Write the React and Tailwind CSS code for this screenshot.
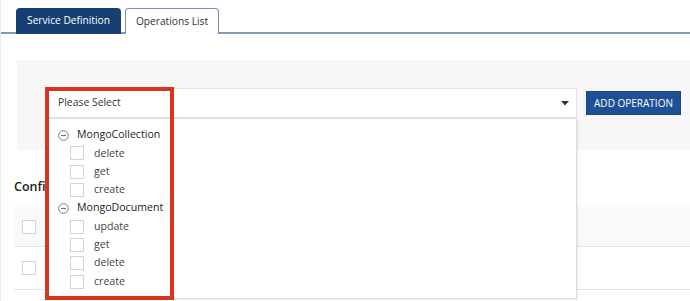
import React from "react";

function Box({ className = "" }) {
  return <span className={"block w-[14px] h-[14px] border border-[#d4d4d4] bg-white " + className} />;
}

function Minus() {
  return (
    <svg width="11" height="11" viewBox="0 0 11 11" className="shrink-0">
      <circle cx="5.5" cy="5.5" r="4.8" fill="none" stroke="#7a7a7a" strokeWidth="1" />
      <line x1="3" y1="5.5" x2="8" y2="5.5" stroke="#7a7a7a" strokeWidth="1.2" />
    </svg>
  );
}

function Group({ name, items }) {
  return (
    <>
      <div className="h-[18.3px] flex items-center pl-[12px] gap-[8px]">
        <Minus />
        <span className="text-[10.6px] text-[#1e1e1e] font-medium">{name}</span>
      </div>
      {items.map((it, i) => (
        <div key={i} className="h-[18.3px] flex items-center pl-[24px] gap-[10px]">
          <Box />
          <span className="text-[10.6px] text-[#444]">{it}</span>
        </div>
      ))}
    </>
  );
}

export default function App() {
  return (
    <div
      className="w-[690px] h-[301px] overflow-hidden bg-white border-l border-[#ececec]"
      style={{ fontFamily: '"Open Sans", "Noto Sans", sans-serif' }}
    >
      <div className="h-[34px] flex items-end gap-[4px] pl-[15px] border-b-2 border-[#8299b8]">
        <div className="w-[105px] -mb-[2px] h-[26px] bg-[#163f72] rounded-t-[4px] flex items-center justify-center text-white text-[10.2px]">
          Service Definition
        </div>
        <div className="w-[94px] h-[26px] -mb-[2px] bg-white border border-b-0 border-[#7790b2] rounded-t-[4px] flex items-center justify-center text-[#333] text-[10.2px]">
          Operations List
        </div>
      </div>

      <div className="ml-[16px] mt-[26px] h-[90px] bg-[#f7f7f7] pt-[28px] pl-[28px] flex items-start gap-[9px]">
        <div className="relative w-[532px] h-[30px] bg-white border border-[#e2e2e2] flex items-center pl-[12px] pr-[7px] justify-between">
          <span className="text-[10.4px] text-[#333]">Please Select</span>
          <svg width="8" height="5" viewBox="0 0 8 5">
            <path d="M0 0 L8 0 L4 4.5 Z" fill="#333" />
          </svg>
          <div className="absolute left-[-1px] top-[29px] w-[532px] h-[181px] bg-white border border-[#dcdcdc] shadow-[1px_1px_2px_rgba(0,0,0,0.08)] pt-[7px] z-10">
            <Group name="MongoCollection" items={["delete", "get", "create"]} />
            <Group name="MongoDocument" items={["update", "get", "delete", "create"]} />
          </div>
          <div className="absolute left-[-1px] top-[-2px] w-[129px] h-[213px] border-[4px] border-[#d8351f] z-20 pointer-events-none" />
        </div>
        <button className="mt-[3px] w-[95px] h-[24px] bg-[#1f4f95] border border-[#1a4584] text-white text-[10px] flex items-center justify-center whitespace-nowrap">
          ADD OPERATION
        </button>
      </div>

      <div className="ml-[13px] mt-[27px] w-[31px] overflow-hidden whitespace-nowrap text-[12.5px] font-semibold text-[#222] leading-[20px]">
        Configured Operations
      </div>

      <div className="ml-[13px] mt-[10px]">
        <div className="h-[40px] bg-[#f8f9fa] border-b border-[#e4e4e4] flex items-center pl-[8px]">
          <Box />
        </div>
        <div className="h-[43px] border-b border-[#e4e4e4] flex items-center pl-[8px]">
          <Box />
        </div>
      </div>
    </div>
  );
}
